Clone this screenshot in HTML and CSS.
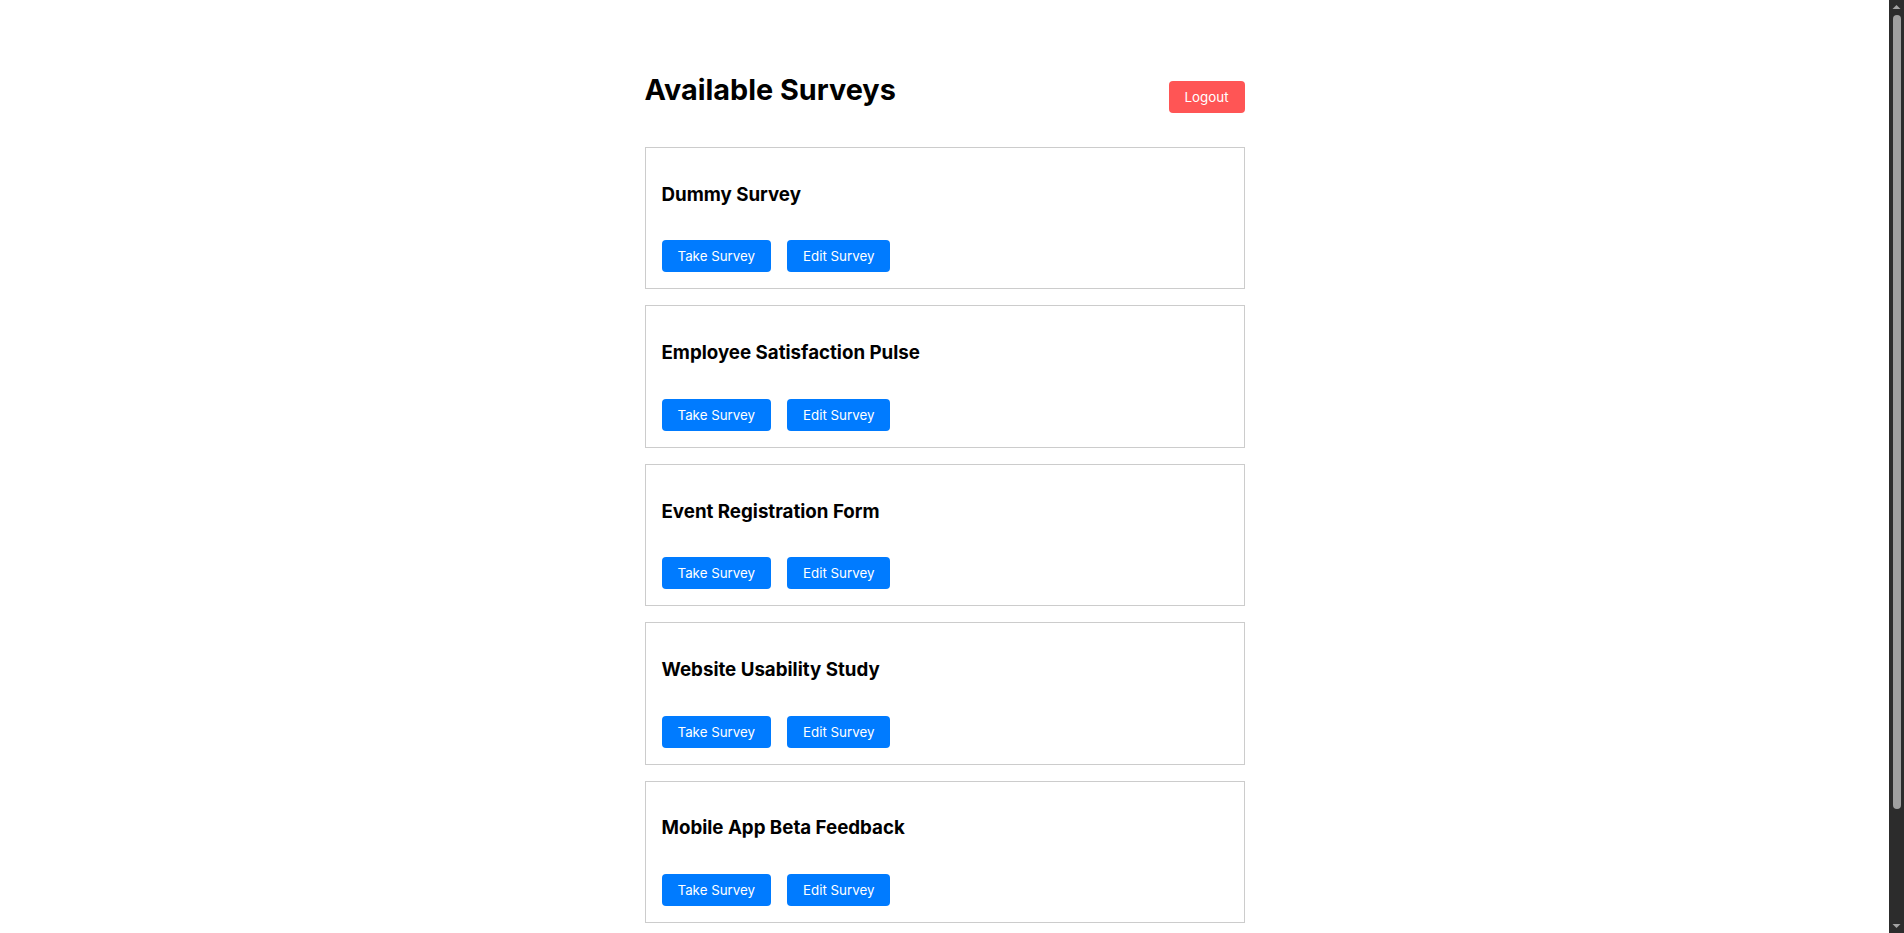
FILE: index.html
```html
<!DOCTYPE html>
<html lang="en">
<head>
<meta charset="utf-8">
<title>Available Surveys</title>
<link rel="stylesheet" href="styles.css">
</head>
<body>
<div class="container">
  <header class="header">
    <h1 class="title">Available Surveys</h1>
    <button class="btn btn-logout">Logout</button>
  </header>
  <div class="survey-list">
    <div class="survey-card">
      <h3 class="survey-title">Dummy Survey</h3>
      <div class="actions">
        <button class="btn btn-primary">Take Survey</button>
        <button class="btn btn-primary">Edit Survey</button>
      </div>
    </div>
    <div class="survey-card">
      <h3 class="survey-title">Employee Satisfaction Pulse</h3>
      <div class="actions">
        <button class="btn btn-primary">Take Survey</button>
        <button class="btn btn-primary">Edit Survey</button>
      </div>
    </div>
    <div class="survey-card">
      <h3 class="survey-title">Event Registration Form</h3>
      <div class="actions">
        <button class="btn btn-primary">Take Survey</button>
        <button class="btn btn-primary">Edit Survey</button>
      </div>
    </div>
    <div class="survey-card">
      <h3 class="survey-title">Website Usability Study</h3>
      <div class="actions">
        <button class="btn btn-primary">Take Survey</button>
        <button class="btn btn-primary">Edit Survey</button>
      </div>
    </div>
    <div class="survey-card">
      <h3 class="survey-title">Mobile App Beta Feedback</h3>
      <div class="actions">
        <button class="btn btn-primary">Take Survey</button>
        <button class="btn btn-primary">Edit Survey</button>
      </div>
    </div>
  </div>
</div>
<div class="scrollbar" aria-hidden="true">
  <svg class="sb-arrow" width="15" height="14" viewBox="0 0 15 14"><path d="M3.5 9 L7.5 5 L11.5 9 Z" fill="#a3a3a3"/></svg>
  <div class="sb-track"><div class="sb-thumb"></div></div>
  <svg class="sb-arrow" width="15" height="14" viewBox="0 0 15 14"><path d="M3.5 5 L7.5 9 L11.5 5 Z" fill="#a3a3a3"/></svg>
</div>
</body>
</html>
```
FILE: styles.css
```css
html, body {
  margin: 0;
  padding: 0;
  background: #ffffff;
}

body {
  font-family: Inter, "Noto Sans", sans-serif;
  color: #000000;
  padding-right: 15px;
}

.container {
  max-width: 600px;
  margin: 0 auto;
  padding: 72px 0 22px;
}

.header {
  display: flex;
  justify-content: space-between;
  align-items: flex-start;
  margin-bottom: 34px;
}

.title {
  font-size: 28.8px;
  font-weight: 700;
  margin: 0;
}

.btn {
  font-family: Inter, "Noto Sans", sans-serif;
  font-size: 13.333px;
  line-height: 16px;
  padding: 8px 16px;
  border: none;
  border-radius: 4px;
  color: #ffffff;
  cursor: pointer;
}

.btn-logout {
  background: #ff5555;
  margin-top: 9px;
}

.btn-primary {
  background: #007bff;
}

.survey-card {
  border: 1px solid #cccccc;
  padding: 16px;
  margin-bottom: 16px;
}

.survey-title {
  font-size: 18.72px;
  font-weight: 700;
  margin: 18.72px 0;
}

.actions {
  display: flex;
  gap: 16px;
  padding-top: 16px;
}

/* browser scrollbar lookalike */
.scrollbar {
  position: fixed;
  top: 0;
  right: 0;
  bottom: 0;
  width: 15px;
  background: #2c2c2c;
  display: flex;
  flex-direction: column;
}

.sb-arrow {
  display: block;
  flex: none;
}

.sb-track {
  flex: 1;
  padding: 1px 0 110px;
  display: flex;
  justify-content: center;
}

.sb-thumb {
  width: 8px;
  flex: none;
  height: 100%;
  border-radius: 4px;
  background: #9f9f9f;
}
```
